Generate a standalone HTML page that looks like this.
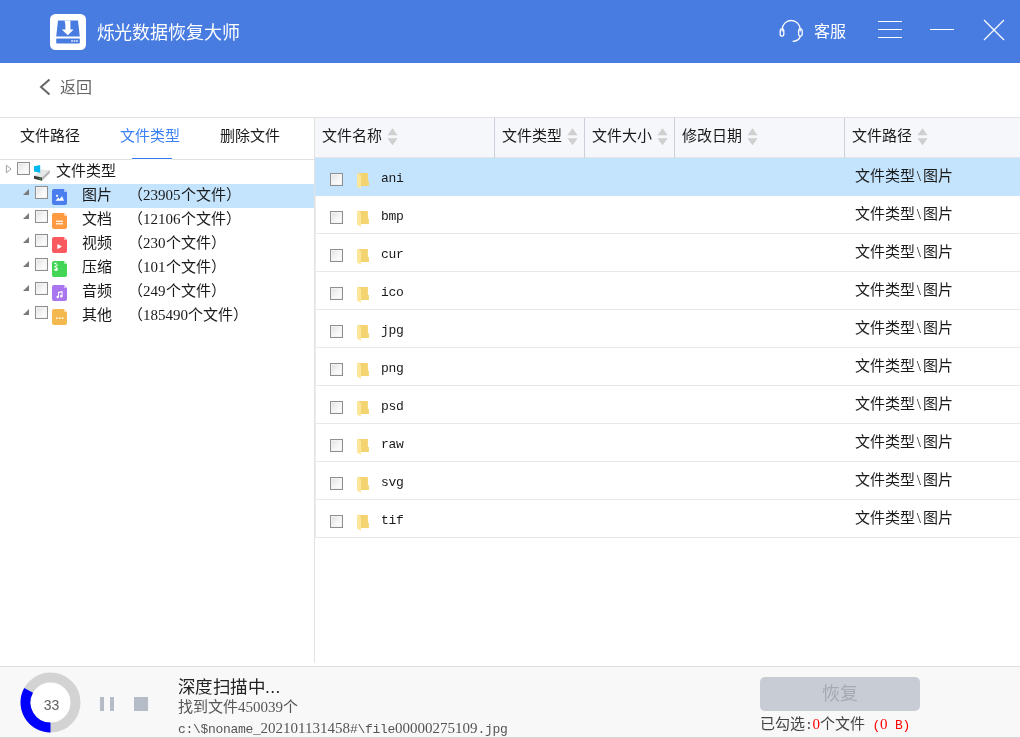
<!DOCTYPE html>
<html lang="zh-CN">
<head>
<meta charset="utf-8">
<title>烁光数据恢复大师</title>
<style>
*{box-sizing:border-box;margin:0;padding:0}
html,body{width:1020px;height:738px;overflow:hidden;background:#fff}
body{will-change:transform;position:relative;font-family:"Liberation Sans",sans-serif;color:#1a1a1a}
.abs{position:absolute}
.song{font-family:"Liberation Serif",serif;font-size:15px;line-height:16px;white-space:nowrap}
.mono{font-family:"Liberation Mono",monospace;font-size:13px;letter-spacing:-0.3px}
/* title bar */
#titlebar{position:absolute;left:0;top:0;width:1020px;height:63px;background:#487ce1}
#logo{position:absolute;left:50px;top:14px;width:36px;height:36px}
#apptitle{position:absolute;left:96.5px;top:20px;font-size:18px;line-height:26px;color:#fff;white-space:nowrap;letter-spacing:-0.1px}
#kefu{position:absolute;left:814px;top:19.5px;font-size:16px;line-height:24px;color:#fff;white-space:nowrap}
/* back row */
#back{position:absolute;left:60px;top:77px;font-size:16px;line-height:22px;color:#666;white-space:nowrap}
.hline{position:absolute;height:1px;background:#e1e1e1}
.vline{position:absolute;width:1px;background:#e2e2e2}
/* tabs */
.tab{position:absolute;top:128px}
.tab.on{color:#3b82f6}
/* tree */
.trow{position:absolute;left:0;width:314px;height:24px}
.trow.sel{background:#c4e4fd}
.cb{position:absolute;width:13px;height:13px;border:1px solid #8e8f8f;background:linear-gradient(135deg,#e0e0e0 0%,#f6f6f6 55%,#ffffff 100%);box-shadow:inset 0 0 0 1px #f3f3f3}
.tri{position:absolute;width:0;height:0;border-style:solid;border-width:0 0 6px 6px;border-color:transparent transparent #7a7a7a transparent}
.ticon{position:absolute;left:52px;width:15px;height:16px}
.tname{position:absolute;left:82px}
.tcount{position:absolute;left:128px}
/* table */
#thead{position:absolute;left:315px;top:118px;width:705px;height:39px;background:#f6f7fb}
.th{position:absolute;top:128px}
.colsep{position:absolute;top:118px;width:1px;height:40px;background:#c9d0da}
.sort{position:absolute;top:128px;width:11px;height:18px}
.row{position:absolute;left:315px;width:705px;height:38px;border-bottom:1px solid #e8e8e8;border-left:1px solid #ececec}
.row.sel{background:#c4e4fd;border-color:#c4e4fd}
.row .cb{left:14px;top:15px}
.row .fold{position:absolute;left:40px;top:15px;width:14px;height:16px}
.row .fname{position:absolute;left:65px;top:13px;line-height:16px}
.row .fpath{position:absolute;left:539px;top:10px}
/* footer */
#footer{position:absolute;left:0;top:666px;width:1020px;height:72px;background:#f8f8f8;border-top:1px solid #dedede}
#btn{position:absolute;left:760px;top:677px;width:160px;height:34px;border-radius:5px;background:#c8ccd4;color:#a6aab3;font-size:18px;line-height:34px;text-align:center}
.dg{font-family:"Liberation Serif",serif;font-size:15px;letter-spacing:0}
.bs{display:inline-block;width:7.5px;text-align:center}
</style>
</head>
<body>
<!-- TITLE BAR -->
<div id="titlebar">
  <svg id="logo" viewBox="0 0 36 36">
    <rect x="0" y="0" width="36" height="36" rx="5.5" fill="#fff"/>
    <path d="M8 6.5 H28 L29.8 22.6 H6.2 Z" fill="#487ce1"/>
    <rect x="6.2" y="24.4" width="23.6" height="5.2" rx="0.8" fill="#487ce1"/>
    <rect x="21.2" y="26.3" width="1.6" height="1.4" fill="#fff"/><rect x="23.7" y="26.3" width="1.6" height="1.4" fill="#fff"/><rect x="26.2" y="26.3" width="1.6" height="1.4" fill="#fff"/>
    <path d="M14.5 6.5 H20.4 V15.5 H23.6 L17.8 21.3 L11.8 15.5 H15.4 C15.6 12 15.3 9 14.5 6.5 Z" fill="#fff"/>
  </svg>
  <div id="apptitle">烁光数据恢复大师</div>
  <svg class="abs" style="left:778px;top:19px" width="28" height="25" viewBox="0 0 28 25" fill="none" stroke="#fff" stroke-width="1.3">
    <path d="M4.2 12.5 V10.5 A9 9 0 0 1 22.2 10.5 V12.5"/>
    <rect x="2.2" y="9.8" width="3.6" height="7.4" rx="1.8"/>
    <rect x="20.6" y="9.8" width="3.6" height="7.4" rx="1.8"/>
    <path d="M22.4 17 C21.5 20.5 18.5 22.3 14.6 22.3"/>
  </svg>
  <div id="kefu">客服</div>
  <div class="abs" style="left:878px;top:21px;width:24px;height:1px;background:#fff"></div>
  <div class="abs" style="left:878px;top:29px;width:24px;height:1px;background:#fff"></div>
  <div class="abs" style="left:878px;top:37px;width:24px;height:1px;background:#fff"></div>
  <div class="abs" style="left:930px;top:29px;width:24px;height:1px;background:#fff"></div>
  <svg class="abs" style="left:983px;top:19px" width="22" height="22" viewBox="0 0 22 22" stroke="#fff" stroke-width="1.2"><path d="M1 1 L21 21 M21 1 L1 21"/></svg>
</div>

<!-- BACK ROW -->
<svg class="abs" style="left:38px;top:78px" width="14" height="18" viewBox="0 0 14 18" fill="none" stroke="#666" stroke-width="2"><path d="M11.5 1.5 L3 9 L11.5 16.5"/></svg>
<div id="back">返回</div>
<div class="hline" style="left:0;top:117px;width:1020px"></div>

<!-- TABS -->
<div class="tab song" style="left:20px">文件路径</div>
<div class="tab song on" style="left:120px">文件类型</div>
<div class="tab song" style="left:220px">删除文件</div>
<div class="hline" style="left:0;top:159px;width:314px"></div>
<div class="abs" style="left:132px;top:158px;width:40px;height:1px;background:#3278f5"></div>
<div class="abs" style="left:132px;top:159px;width:40px;height:1px;background:#fdfaf5"></div>
<div class="vline" style="left:314px;top:118px;height:545px"></div>

<!-- TREE -->
<div class="trow" style="top:160px">
  <svg class="abs" style="left:5px;top:4px" width="8" height="10" viewBox="0 0 8 10"><path d="M1.4 1.2 L6 5 L1.4 8.8 Z" fill="#fff" stroke="#a0a0a0" stroke-width="1"/></svg>
  <div class="cb" style="left:17px;top:2px"></div>
  <svg class="abs" style="left:33px;top:4px" width="19" height="18" viewBox="0 0 19 18">
    <path d="M1 11.8 L8 5.4 L16.8 5.9 L9 13.4 Z" fill="#e6e7e9"/>
    <path d="M1 11.8 L9 13.4 V16.7 L1 14.7 Z" fill="#3c3c3c"/>
    <path d="M9 13.4 L16.8 5.9 V9 L9 16.7 Z" fill="#b4b4b4"/>
    <path d="M6.2 14 L8 14.4 V15.4 L6.2 15 Z" fill="#2fc53a"/>
    <path d="M1 2.35 L7.2 0.9 V8.85 L1 7.4 Z" fill="#00b7f1"/>
  </svg>
  <div class="song abs" style="left:56px;top:3px">文件类型</div>
</div>

<div class="trow sel" style="top:184px">
  <div class="tri" style="left:23px;top:5px"></div><div class="cb" style="left:35px;top:2px"></div>
  <svg class="ticon" style="top:5px" viewBox="0 0 15 16"><path d="M2 0 H12 L15 3 V14 a2 2 0 0 1 -2 2 H2 a2 2 0 0 1 -2 -2 V2 a2 2 0 0 1 2 -2 Z" fill="#4a7eee"/><path d="M12 0 L15 3 H12.8 a0.8 0.8 0 0 1 -0.8 -0.8 Z" fill="#b9cdf9"/><path d="M3.5 11.7 L6.2 8.6 L7.7 10.2 L10 7 L12 11.7 Z" fill="#fff"/><circle cx="5" cy="6.8" r="1.1" fill="#fff"/></svg>
  <div class="song tname" style="top:3px">图片</div><div class="song tcount" style="top:3px">（23905个文件）</div>
</div>
<div class="trow" style="top:208px">
  <div class="tri" style="left:23px;top:5px"></div><div class="cb" style="left:35px;top:2px"></div>
  <svg class="ticon" style="top:5px" viewBox="0 0 15 16"><path d="M2 0 H12 L15 3 V14 a2 2 0 0 1 -2 2 H2 a2 2 0 0 1 -2 -2 V2 a2 2 0 0 1 2 -2 Z" fill="#ff9a40"/><path d="M12 0 L15 3 H12.8 a0.8 0.8 0 0 1 -0.8 -0.8 Z" fill="#ffd4ae"/><rect x="4" y="7.6" width="7" height="1.2" fill="#fff"/><rect x="4" y="10.2" width="7" height="1.2" fill="#fff"/></svg>
  <div class="song tname" style="top:3px">文档</div><div class="song tcount" style="top:3px">（12106个文件）</div>
</div>
<div class="trow" style="top:232px">
  <div class="tri" style="left:23px;top:5px"></div><div class="cb" style="left:35px;top:2px"></div>
  <svg class="ticon" style="top:5px" viewBox="0 0 15 16"><path d="M2 0 H12 L15 3 V14 a2 2 0 0 1 -2 2 H2 a2 2 0 0 1 -2 -2 V2 a2 2 0 0 1 2 -2 Z" fill="#f9595f"/><path d="M12 0 L15 3 H12.8 a0.8 0.8 0 0 1 -0.8 -0.8 Z" fill="#fcb9bc"/><path d="M5.4 7 L10 9.6 L5.4 12.2 Z" fill="#fff"/></svg>
  <div class="song tname" style="top:3px">视频</div><div class="song tcount" style="top:3px">（230个文件）</div>
</div>
<div class="trow" style="top:256px">
  <div class="tri" style="left:23px;top:5px"></div><div class="cb" style="left:35px;top:2px"></div>
  <svg class="ticon" style="top:5px" viewBox="0 0 15 16"><path d="M2 0 H12 L15 3 V14 a2 2 0 0 1 -2 2 H2 a2 2 0 0 1 -2 -2 V2 a2 2 0 0 1 2 -2 Z" fill="#43d656"/><path d="M12 0 L15 3 H12.8 a0.8 0.8 0 0 1 -0.8 -0.8 Z" fill="#b4f0c0"/><path d="M2.4 1.8 h2 v1.3 h-2 z M3.6 3.4 h2 v1.3 h-2 z M2.4 5 h2 v1.3 h-2 z M3.6 6.6 h2 v1.3 h-2 z M2.4 8.1 h3.2 v1.7 h-3.2 z" fill="#fff"/></svg>
  <div class="song tname" style="top:3px">压缩</div><div class="song tcount" style="top:3px">（101个文件）</div>
</div>
<div class="trow" style="top:280px">
  <div class="tri" style="left:23px;top:5px"></div><div class="cb" style="left:35px;top:2px"></div>
  <svg class="ticon" style="top:5px" viewBox="0 0 15 16"><path d="M2 0 H12 L15 3 V14 a2 2 0 0 1 -2 2 H2 a2 2 0 0 1 -2 -2 V2 a2 2 0 0 1 2 -2 Z" fill="#a876ee"/><path d="M12 0 L15 3 H12.8 a0.8 0.8 0 0 1 -0.8 -0.8 Z" fill="#dcc8f8"/><path d="M6 7 L10.6 6 V11.2 a1.3 1.3 0 1 1 -1 -1.3 V7.6 L7 8.2 V12 a1.3 1.3 0 1 1 -1 -1.3 Z" fill="#fff"/></svg>
  <div class="song tname" style="top:3px">音频</div><div class="song tcount" style="top:3px">（249个文件）</div>
</div>
<div class="trow" style="top:304px">
  <div class="tri" style="left:23px;top:5px"></div><div class="cb" style="left:35px;top:2px"></div>
  <svg class="ticon" style="top:5px" viewBox="0 0 15 16"><path d="M2 0 H12 L15 3 V14 a2 2 0 0 1 -2 2 H2 a2 2 0 0 1 -2 -2 V2 a2 2 0 0 1 2 -2 Z" fill="#f4b94e"/><path d="M12 0 L15 3 H12.8 a0.8 0.8 0 0 1 -0.8 -0.8 Z" fill="#fce2b4"/><rect x="4" y="8.4" width="1.6" height="1.5" fill="#fff"/><rect x="6.9" y="8.4" width="1.6" height="1.5" fill="#fff"/><rect x="9.8" y="8.4" width="1.6" height="1.5" fill="#fff"/></svg>
  <div class="song tname" style="top:3px">其他</div><div class="song tcount" style="top:3px">（185490个文件）</div>
</div>

<!-- TABLE HEADER -->
<div id="thead"></div>
<div class="hline" style="left:315px;top:157px;width:705px;background:#e3e5ea"></div>
<div class="th song" style="left:322px">文件名称</div>
<div class="th song" style="left:502px">文件类型</div>
<div class="th song" style="left:592px">文件大小</div>
<div class="th song" style="left:682px">修改日期</div>
<div class="th song" style="left:852px">文件路径</div>
<div class="colsep" style="left:494px"></div>
<div class="colsep" style="left:584px"></div>
<div class="colsep" style="left:674px"></div>
<div class="colsep" style="left:844px"></div>
<svg class="sort" style="left:386.5px" viewBox="0 0 11 18"><path d="M5.5 0.3 L10.6 7.3 H0.4 Z M0.4 10.2 H10.6 L5.5 17.2 Z" fill="#cfcfcf"/></svg>
<svg class="sort" style="left:566.5px" viewBox="0 0 11 18"><path d="M5.5 0.3 L10.6 7.3 H0.4 Z M0.4 10.2 H10.6 L5.5 17.2 Z" fill="#cfcfcf"/></svg>
<svg class="sort" style="left:656.5px" viewBox="0 0 11 18"><path d="M5.5 0.3 L10.6 7.3 H0.4 Z M0.4 10.2 H10.6 L5.5 17.2 Z" fill="#cfcfcf"/></svg>
<svg class="sort" style="left:746.5px" viewBox="0 0 11 18"><path d="M5.5 0.3 L10.6 7.3 H0.4 Z M0.4 10.2 H10.6 L5.5 17.2 Z" fill="#cfcfcf"/></svg>
<svg class="sort" style="left:916.5px" viewBox="0 0 11 18"><path d="M5.5 0.3 L10.6 7.3 H0.4 Z M0.4 10.2 H10.6 L5.5 17.2 Z" fill="#cfcfcf"/></svg>

<!-- TABLE ROWS -->
<svg width="0" height="0" style="position:absolute"><defs>
  <g id="folder"><path d="M1.2 0 H11.9 V8 H12.9 V13 H4.5 V2 Z" fill="#f4d470"/><path d="M1 0 L4.9 2.6 V15.7 L1 13.6 Z" fill="#fee699"/></g>
</defs></svg>
<div class="row sel" style="top:158px"><div class="cb"></div><svg class="fold" viewBox="0 0 14 16"><use href="#folder"/></svg><div class="fname mono">ani</div><div class="fpath song">文件类型<span class="bs">\</span>图片</div></div>
<div class="row" style="top:196px"><div class="cb"></div><svg class="fold" viewBox="0 0 14 16"><use href="#folder"/></svg><div class="fname mono">bmp</div><div class="fpath song">文件类型<span class="bs">\</span>图片</div></div>
<div class="row" style="top:234px"><div class="cb"></div><svg class="fold" viewBox="0 0 14 16"><use href="#folder"/></svg><div class="fname mono">cur</div><div class="fpath song">文件类型<span class="bs">\</span>图片</div></div>
<div class="row" style="top:272px"><div class="cb"></div><svg class="fold" viewBox="0 0 14 16"><use href="#folder"/></svg><div class="fname mono">ico</div><div class="fpath song">文件类型<span class="bs">\</span>图片</div></div>
<div class="row" style="top:310px"><div class="cb"></div><svg class="fold" viewBox="0 0 14 16"><use href="#folder"/></svg><div class="fname mono">jpg</div><div class="fpath song">文件类型<span class="bs">\</span>图片</div></div>
<div class="row" style="top:348px"><div class="cb"></div><svg class="fold" viewBox="0 0 14 16"><use href="#folder"/></svg><div class="fname mono">png</div><div class="fpath song">文件类型<span class="bs">\</span>图片</div></div>
<div class="row" style="top:386px"><div class="cb"></div><svg class="fold" viewBox="0 0 14 16"><use href="#folder"/></svg><div class="fname mono">psd</div><div class="fpath song">文件类型<span class="bs">\</span>图片</div></div>
<div class="row" style="top:424px"><div class="cb"></div><svg class="fold" viewBox="0 0 14 16"><use href="#folder"/></svg><div class="fname mono">raw</div><div class="fpath song">文件类型<span class="bs">\</span>图片</div></div>
<div class="row" style="top:462px"><div class="cb"></div><svg class="fold" viewBox="0 0 14 16"><use href="#folder"/></svg><div class="fname mono">svg</div><div class="fpath song">文件类型<span class="bs">\</span>图片</div></div>
<div class="row" style="top:500px"><div class="cb"></div><svg class="fold" viewBox="0 0 14 16"><use href="#folder"/></svg><div class="fname mono">tif</div><div class="fpath song">文件类型<span class="bs">\</span>图片</div></div>

<!-- FOOTER -->
<div id="footer"></div>
<svg class="abs" style="left:20px;top:672px" width="61" height="61" viewBox="0 0 61 61">
  <circle cx="30.5" cy="30.5" r="25" fill="#fff" stroke="#d3d3d3" stroke-width="10"/>
  <path d="M30.5 55.5 A25 25 0 0 1 8.6 18.45" fill="none" stroke="#0000ff" stroke-width="10"/>
</svg>
<div class="abs" style="left:21px;top:695.5px;width:61px;text-align:center;font-size:14px;line-height:18px;color:#606060">33</div>
<div class="abs" style="left:100px;top:697px;width:4px;height:14px;background:#b5bbc7"></div>
<div class="abs" style="left:110px;top:697px;width:4px;height:14px;background:#b5bbc7"></div>
<div class="abs" style="left:134px;top:697px;width:14px;height:14px;background:#b5bbc7"></div>
<div class="abs" style="left:178px;top:675px;font-size:17.5px;letter-spacing:0.4px;line-height:24px;color:#222;white-space:nowrap">深度扫描中...</div>
<div class="abs song" style="left:178px;top:699px;color:#555">找到文件450039个</div>
<div class="abs mono" style="left:178px;top:719.5px;line-height:16px;color:#555;white-space:nowrap">c:\$noname_<span class="dg">202101131458</span>#\file<span class="dg">00000275109</span>.jpg</div>
<div class="abs" style="left:0;top:737px;width:1020px;height:1px;background:#d4d4d4"></div>
<div id="btn">恢复</div>
<div class="abs song" style="left:760px;top:716px;color:#444">已勾选<span class="mono">:</span><span style="color:#f00">0</span>个文件<span class="mono" style="color:#f00"> (</span><span style="color:#f00">0</span><span class="mono" style="color:#f00"> B)</span></div>
</body>
</html>
